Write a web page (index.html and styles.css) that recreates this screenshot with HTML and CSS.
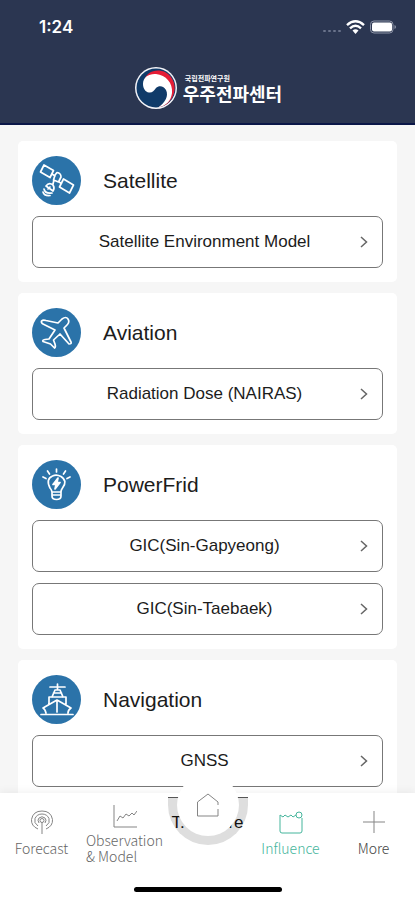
FILE: index.html
```html
<!DOCTYPE html>
<html lang="en">
<head>
<meta charset="utf-8">
<meta name="viewport" content="width=device-width, initial-scale=1">
<title>우주전파센터</title>
<link rel="stylesheet" href="styles.css">
</head>
<body>
<header class="header">
  <div class="status">
    <span class="time">1:24</span>
    <svg class="signal" viewBox="0 0 76 16" aria-hidden="true">
      <g fill="#6a738b"><rect x="3" y="11" width="3" height="2" rx="1"/><rect x="8" y="11" width="3" height="2" rx="1"/><rect x="13" y="11" width="3" height="2" rx="1"/><rect x="18" y="11" width="3" height="2" rx="1"/></g>
      <g fill="none" stroke="#fff" stroke-width="2.4"><path d="M27 6.2Q35.500-1.500 44 6.200"/><path d="M30 9.300Q35.500 4.400 41 9.300"/></g>
      <path fill="#fff" d="M32.500 11.500Q35.500 9 38.500 11.500L35.500 15Z"/>
      <rect x="50.500" y="2" width="22.500" height="12" rx="3.500" fill="none" stroke="#8d94a7"/>
      <rect x="52" y="3.500" width="20" height="9" rx="2" fill="#fff"/>
      <path d="M74.500 6v4q1.500-.5 1.500-2t-1.500-2z" fill="#8d94a7"/>
    </svg>
  </div>
  <div class="brand">
    <svg class="emblem" viewBox="0 0 42 42" aria-hidden="true">
      <circle cx="21" cy="21" r="21" fill="#f4f4f8"/>
      <circle cx="21" cy="21" r="19.500" fill="#103b69"/>
      <path d="M9 14C11 5 21 1 30 5C39 10 42 20 38 29C35 35 31 39 24 40C33 34 36 27 32 20C27 12 17 7 9 14Z" fill="#e51d36"/>
      <path d="M8 17C8 10 14 6.500 21 7C31 8 38 16 37 26C36 34 31 39 23 40.500C30 36 34 29 31 23C29 19 24 18 21 21C19 24 17 26 14 25.500C10 25 8 21 8 17Z" fill="#fff"/>
    </svg>
    <div class="names" lang="ko">
      <span class="institute">국립전파연구원</span>
      <span class="center-name">우주전파센터</span>
    </div>
  </div>
</header>

<main class="content">
  <section class="card">
    <div class="heading">
      <svg class="badge" viewBox="0 0 49 49" aria-hidden="true">
        <circle class="disc" cx="24.500" cy="24.500" r="24.500"/>
        <path d="M12 9L21.500 14.500L18 21.500L8.500 16ZM31.500 23L41.500 29L37.500 37L27.500 31ZM20 18L23 20M27 26L29.500 27.500M23 19L25 16.500Q29 17 29 21L26.500 26L21.500 24ZM22 24L21 28M14 30Q17 26 21 29Q23 32 21 35ZM12 33Q13 38 20 37M11 36Q12 40 18 39.500M16 33L18 31"/>
      </svg>
      <h2>Satellite</h2>
    </div>
    <button class="link" type="button"><span>Satellite Environment Model</span><svg class="arrow" viewBox="0 0 8 12" aria-hidden="true"><path d="M1 1L6.500 6L1 11"/></svg></button>
  </section>

  <section class="card">
    <div class="heading">
      <svg class="badge" viewBox="0 0 49 49" aria-hidden="true">
        <circle class="disc" cx="24.500" cy="24.500" r="24.500"/>
        <path d="M9.500 13Q11 11.500 14 12.500L26 15L30 11Q34 8 36 11Q38 14 35 17L32 20L39 34Q40 36 37 36L28 26L21.500 32L23 36Q24 39 22.500 40L18.500 36L11 33.500Q10 32 13 31.500L17 31L23 22L11 16Q9 15 9.500 13Z"/>
      </svg>
      <h2>Aviation</h2>
    </div>
    <button class="link" type="button"><span>Radiation Dose (NAIRAS)</span><svg class="arrow" viewBox="0 0 8 12" aria-hidden="true"><path d="M1 1L6.500 6L1 11"/></svg></button>
  </section>

  <section class="card">
    <div class="heading">
      <svg class="badge" viewBox="0 0 49 49" aria-hidden="true">
        <circle class="disc" cx="24.500" cy="24.500" r="24.500"/>
        <path d="M20 32Q19.500 29.500 18 28Q13.500 19 20.500 16Q24.500 14 29 16.500Q36 21 30.500 28Q29 30 29 32ZM20 32V36Q20 39.500 24.500 39.500Q29 39.500 29 36V32M20 35H29M24.500 9V12M15.500 11L17.500 14M33.500 11L31.500 14M11 17L14 18.500M38 17L35 18.500"/>
        <path d="M26 18L21 24.500H24L23 29L28 22.500H25Z" fill="#fff"/>
      </svg>
      <h2>PowerFrid</h2>
    </div>
    <button class="link" type="button"><span>GIC(Sin-Gapyeong)</span><svg class="arrow" viewBox="0 0 8 12" aria-hidden="true"><path d="M1 1L6.500 6L1 11"/></svg></button>
    <button class="link" type="button"><span>GIC(Sin-Taebaek)</span><svg class="arrow" viewBox="0 0 8 12" aria-hidden="true"><path d="M1 1L6.500 6L1 11"/></svg></button>
  </section>

  <section class="card">
    <div class="heading">
      <svg class="badge" viewBox="0 0 49 49" aria-hidden="true">
        <circle class="disc" cx="24.500" cy="24.500" r="24.500"/>
        <path d="M9 39.500H41M14 38Q13 34 11 33L25 25L39 33Q36 35 36 38M25 26V37M17 29V22H34V29M20 22L23 15H28L31 22M21.500 18H29.500M25.500 9V15M18 12H33"/>
      </svg>
      <h2>Navigation</h2>
    </div>
    <button class="link" type="button"><span>GNSS</span><svg class="arrow" viewBox="0 0 8 12" aria-hidden="true"><path d="M1 1L6.500 6L1 11"/></svg></button>
  </section>
</main>

<nav class="tabs" aria-label="Main">
  <a class="tab" href="#forecast">
    <svg viewBox="0 0 24 26" aria-hidden="true"><path d="M12 13V25M8 20Q1 17 1.500 10.500Q3 2 12 2Q21 2 22.500 10.500Q23 17 16 20M8 17Q3.500 14 5 9.500Q7 5 12 5Q17 5 19 9.500Q20.500 14 16 17M9 14Q7 11 9 9Q12 6.500 15 9Q17 11 15 14"/><circle cx="12" cy="11.500" r="2"/></svg>
    <span>Forecast</span>
  </a>
  <a class="tab tall" href="#observation">
    <svg viewBox="0 0 24 26" aria-hidden="true"><path d="M1 2V24H24M4 18L7 13L10 15L13 11L16 13L19 10L21 12L24 8"/></svg>
    <span>Observation<br>&amp; Model</span>
  </a>
  <a class="tab home" href="#home" aria-label="Home">
    <span class="ring"></span>
    <span class="behind"><span>T.</span><span>re</span></span>
    <span class="disc-home"><svg viewBox="0 0 24 26" aria-hidden="true"><path d="M22 13V10L12 2L1.500 10V24H22V17"/></svg></span>
  </a>
  <a class="tab active" href="#influence" aria-current="page">
    <svg viewBox="0 0 24 26" aria-hidden="true"><path d="M17 6L14 8L12 6L9 8L6 6L4 8L1 6V22Q1 24 3 24H21Q23 24 23 22V9"/><circle cx="20" cy="6" r="3"/></svg>
    <span>Influence</span>
  </a>
  <a class="tab more" href="#more">
    <svg viewBox="0 0 24 26" aria-hidden="true"><path d="M12 2V24M1 13H23"/></svg>
    <span>More</span>
  </a>
  <div class="indicator"></div>
</nav>
</body>
</html>
```
FILE: styles.css
```css
* { box-sizing: border-box; }

body {
  margin: 0;
  height: 100vh;
  display: flex;
  flex-direction: column;
  overflow: hidden;
  background: #f6f6f6;
  color: #1c1c1c;
  font-family: "Liberation Sans", Arial, sans-serif;
}

.header {
  flex: none;
  padding: 16px 19px 14px 39px;
  background: #2b3651;
  border-bottom: 2px solid #0b1748;
  color: #fff;
}

.status {
  display: flex;
  justify-content: space-between;
  align-items: center;
  height: 22px;
}

.time { font: 600 17px/22px Inter, sans-serif; }
.signal { width: 76px; height: 16px; }

.brand {
  display: flex;
  justify-content: center;
  align-items: center;
  gap: 6px;
  margin-top: 29px;
  padding-right: 18px;
}

.emblem { width: 42px; height: 42px; }

.names {
  display: flex;
  flex-direction: column;
  font-family: "Noto Sans CJK KR", sans-serif;
  font-weight: 700;
}

.institute { padding-left: 2px; font-size: 7px; line-height: 10px; }
.center-name { font-size: 18px; line-height: 20px; }

.content {
  flex: 1;
  min-height: 0;
  overflow: hidden;
  display: flex;
  flex-direction: column;
  gap: 11px;
  padding: 16px 18px 0;
}

.card {
  flex: none;
  display: flex;
  flex-direction: column;
  gap: 11px;
  padding: 15px 14px 14px;
  background: #fff;
  border-radius: 5px;
}

.heading { display: flex; align-items: center; gap: 22px; }
.heading h2 { margin: 0; font-size: 21px; font-weight: 400; line-height: 24px; }

.badge {
  width: 49px;
  height: 49px;
  fill: none;
  stroke: #fff;
  stroke-width: 1.7;
  stroke-linejoin: round;
  stroke-linecap: round;
}

.badge .disc { fill: #2b73a9; stroke: none; }

.link {
  display: flex;
  align-items: center;
  width: 100%;
  height: 52px;
  padding: 0 14px 0 16px;
  background: #fff;
  border: 1px solid #777;
  border-radius: 7px;
  color: #1c1c1c;
  font: 17px/20px "Liberation Sans", Arial, sans-serif;
}

.link span { flex: 1; text-align: center; }

.arrow {
  width: 8px;
  height: 12px;
  fill: none;
  stroke: #666;
  stroke-width: 1.5;
}

.tabs {
  flex: none;
  position: relative;
  display: grid;
  grid-template-columns: repeat(5, 1fr);
  grid-template-rows: 91px 16px;
  background: #fff;
  box-shadow: 0 -2px 8px rgba(0, 0, 0, 0.05);
}

.tab {
  display: flex;
  flex-direction: column;
  align-items: center;
  gap: 3px;
  padding-top: 16px;
  color: #666;
  font: 300 14px/20px "Noto Sans CJK KR", sans-serif;
  text-decoration: none;
}

.tab svg {
  width: 24px;
  height: 26px;
  fill: none;
  stroke: #858585;
  stroke-width: 1;
}

.tall { padding-top: 10px; line-height: 16px; }
.active { color: #45b59c; }
.active svg { stroke: #45b59c; }
.more { color: #444; }

.home { position: relative; padding: 0; }

.ring {
  position: absolute;
  top: 0;
  left: 50%;
  width: 80px;
  height: 52px;
  margin-left: -40px;
  background: #dedede;
  border-top: 4px solid #fff;
  border-radius: 0 0 40px 40px;
}

.behind {
  position: absolute;
  top: 4px;
  left: 50%;
  display: flex;
  justify-content: space-between;
  width: 80px;
  height: 36px;
  margin-left: -40px;
  padding: 15px 4px 0;
  border-top: 1px solid #555;
  color: #111;
  font: 17px/20px "Liberation Sans", Arial, sans-serif;
}

.disc-home {
  position: absolute;
  top: -19px;
  left: 50%;
  display: grid;
  place-items: center;
  width: 62px;
  height: 62px;
  margin-left: -31px;
  background: #fff;
  border-radius: 50%;
}

.indicator {
  grid-column: 1 / -1;
  justify-self: center;
  width: 148px;
  height: 5px;
  margin-top: 3px;
  background: #000;
  border-radius: 3px;
}
```
